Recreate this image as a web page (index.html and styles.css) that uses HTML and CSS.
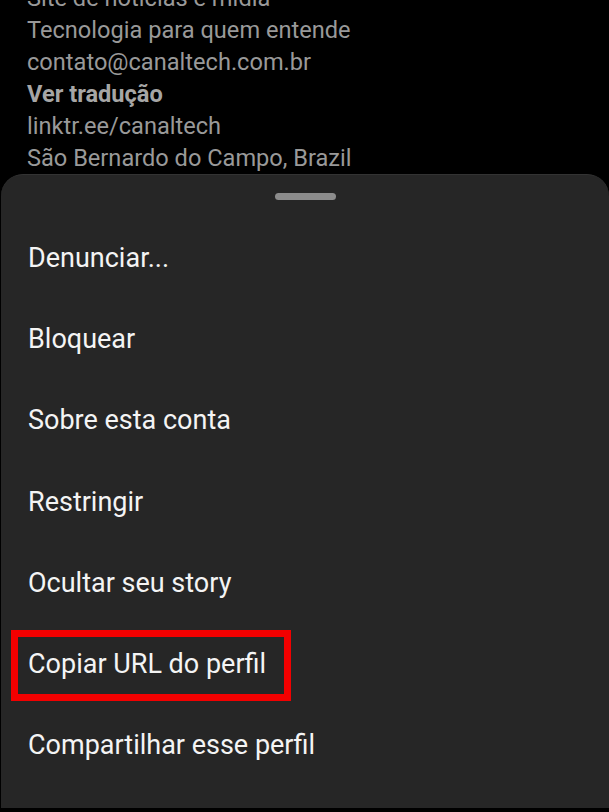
FILE: index.html
```html
<!DOCTYPE html>
<html lang="pt-BR">
<head>
<meta charset="utf-8">
<link rel="stylesheet" href="styles.css">
</head>
<body>
<div class="screen">
  <div class="bio">
    <div class="bio-line">Site de notícias e mídia</div>
    <div class="bio-line">Tecnologia para quem entende</div>
    <div class="bio-line">contato@canaltech.com.br</div>
    <div class="bio-line bold">Ver tradução</div>
    <div class="bio-line">linktr.ee/canaltech</div>
    <div class="bio-line">São Bernardo do Campo, Brazil</div>
  </div>
  <div class="sheet">
    <div class="handle"></div>
    <ul class="menu">
      <li class="item">Denunciar...</li>
      <li class="item">Bloquear</li>
      <li class="item">Sobre esta conta</li>
      <li class="item">Restringir</li>
      <li class="item">Ocultar seu story</li>
      <li class="item highlighted">Copiar URL do perfil<span class="mark"></span></li>
      <li class="item">Compartilhar esse perfil</li>
    </ul>
  </div>
</div>
</body>
</html>
```
FILE: styles.css
```css
html, body {
  margin: 0;
  padding: 0;
  background: #000;
}
.screen {
  width: 609px;
  height: 812px;
  overflow: hidden;
  background: #000;
  font-family: Roboto, "Noto Sans", sans-serif;
  display: flex;
  flex-direction: column;
}
.bio {
  margin-top: -18px;
  padding-left: 27px;
  color: #999;
  font-size: 23.6px;
  line-height: 32px;
}
.bio-line {
  height: 32px;
  white-space: nowrap;
}
.bold {
  font-weight: 700;
  color: #a6a6a6;
}
.sheet {
  background: #262626;
  border-top: 1px solid #333;
  border-radius: 22px 22px 0 0;
  height: 633px;
  margin: 0 0 4px 1px;
  display: flex;
  flex-direction: column;
  align-items: center;
}
.handle {
  width: 61px;
  height: 7px;
  border-radius: 4px;
  background: #8c8c8c;
  margin-top: 18px;
}
.menu {
  list-style: none;
  margin: 18px 0 0;
  padding: 0;
  align-self: stretch;
}
.item {
  position: relative;
  height: 81.2px;
  line-height: 81.2px;
  padding-left: 27px;
  font-size: 27px;
  color: #f4f4f4;
  white-space: nowrap;
}
.mark {
  position: absolute;
  left: 10px;
  top: 6px;
  width: 266px;
  height: 57px;
  border: 7px solid #f20000;
}
```
